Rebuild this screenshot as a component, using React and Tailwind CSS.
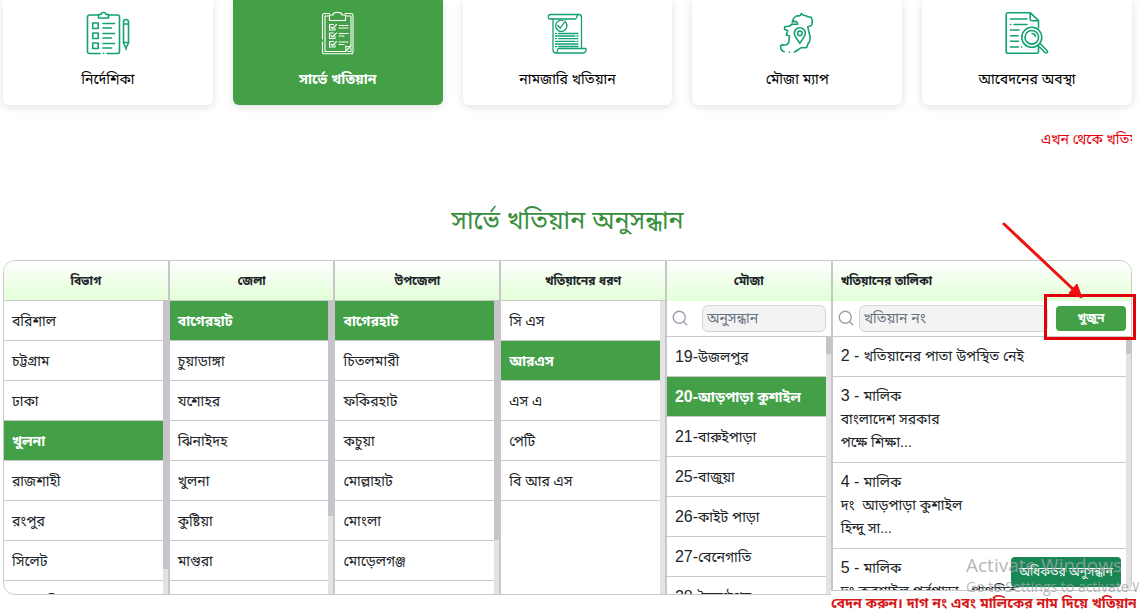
import React, { useState } from 'react';
import { Search } from 'lucide-react';

const ListIcon = () => (
  <svg viewBox="0 0 44 44" className="w-11 h-11" fill="none" stroke="currentColor" strokeWidth="1.6" strokeLinecap="round" strokeLinejoin="round">
    <path d="M12.5 4H3.5a2 2 0 0 0-2 2v34.5a2 2 0 0 0 2 2H14M21 42.5h10.5a2 2 0 0 0 2-2V6a2 2 0 0 0-2-2h-9M17.5 42.5h.2" />
    <path d="M12.5 3.5h2.5a2.5 2 0 0 1 5 0h2.500V7h-10z" />
    <path d="M6.7 12h5.5v5.5H6.7zM6.7 22h5.5v5.5H6.7zM6.7 32h5.5v5.5H6.7z" />
    <path d="M17 12.5h11.5M17 17h8.5M17 22.5h11.5M17 27h8.5M17 32.5h11.5M17 37h8.5" />
    <path d="M37.500 13v-2a2.500 2.500 0 0 1 5 0v21l-2.500 5-2.500-5zM37.500 13h5M37.500 31.500h5M40 37v1.500" />
  </svg>
);

const SurveyIcon = () => (
  <svg viewBox="0 0 44 44" className="w-11 h-11" fill="none" stroke="currentColor" strokeWidth="1.1" strokeLinecap="round" strokeLinejoin="round">
    <path d="M13.5 2.5H8.5a2 2 0 0 0-2 2V28M6.5 31v10a1.800 1.800 0 0 0 2 1.800h26.500a2 2 0 0 0 2-2V4.500a2 2 0 0 0-2-2h-6" />
    <path d="M13.5 5H9v35.5h20.5l5.5-5.5V5h-5.5" />
    <path d="M29.5 40.5c1-2 .8-3.5.2-5.2 1.8.6 3.5.6 5.300-.3M32 40.500h3V37" />
    <path d="M13.5 4h3.5c0-3.500 9-3.500 9 0h3.500v5.500h-16z" />
    <path d="M19 17v2h-5.500v-5.500h4M19 25.500v2h-5.500V22h4M19 34v2h-5.500v-5.500h4" />
    <path d="m15 16 1.500 1.500 4-4M15 24.500l1.500 1.500 4-4M15 33l1.500 1.500 4-4" />
    <path d="M23 14.500h9M23 17h9M23 22.500h9M23 25h5M23 31h9M23 33.500h5" />
  </svg>
);

const ScrollIcon = () => (
  <svg viewBox="0 0 44 44" className="w-11 h-11" fill="none" stroke="currentColor" strokeWidth="1.3" strokeLinecap="round" strokeLinejoin="round">
    <path d="M8 8H4.500C3 8 2.500 3.500 5.500 3.500H34c2 0 2.500 1.500 2.500 3.500v30.500" />
    <path d="M8 8h22.500c1 0 1.200-3 2.500-4.500M8 8v31c0 2 1.200 3 3 3h27.500c2.500 0 3.500-4.500 2-4.500H13.500c-1.200 0-.8 4.300-2.500 4.500" />
    <path d="M20.800 11.500a5.600 5.600 0 1 1-2.800-2M12.700 14.500l2.600 2.700 5-7.200" />
    <path d="M10.500 22.500h1M13.500 22.500h19.500M10.500 25h19.500M32 25h1M10.500 27.700h1M13.500 27.700h19.500M10.500 30.300h19.500M32 30.300h1M10.500 33h22.500M10.500 35.500h1M13.500 35.500h19.500" />
  </svg>
);

const MapIcon = () => (
  <svg viewBox="0 0 44 44" className="w-11 h-11" fill="none" stroke="currentColor" strokeWidth="1.6" strokeLinecap="round" strokeLinejoin="round">
    <path d="M19.500 41l3.300-2 3.400-2.300c2-.3 4 .5 5.600-.4l1-3 1.700-2.600.7-5-1.400-5-1-5c1.500-.7 3.500-.5 4-1.700l.4-3.300c.3-1.500-.5-3.500-1-4.400-1.500-.5-3.500.2-5-1.600-1.500.3-3.500-.7-5-2-.5 1.500-1.500 2.500-2.500 2l-2.500.3-2.400 2-1.600 4c1.500-.7 3.500-.7 4.600 0l1 2c-2 .7-4 .3-5.600 0l-2.700 2-4.700.7-.3 2.600 3.300 1.400-1.600 4.300 3.300 1-.5 4.500c0 2-1.500 4-3.400 4.500-2 0-4-.5-5 .7l.4 3.600c1 1.400 2 2.400 3.300 2.400M14.500 41.300h.3" />
    <path d="M24.800 32.300c-2-3.500-5.500-6.500-5.500-10a5.500 5.500 0 0 1 11 0c0 3.500-3.500 6.500-5.500 10z" />
    <circle cx="24.800" cy="22.300" r="2.300" />
  </svg>
);

const StatusIcon = () => (
  <svg viewBox="0 0 44 44" className="w-11 h-11" fill="none" stroke="currentColor" strokeWidth="1.6" strokeLinecap="round" strokeLinejoin="round">
    <path d="M33.500 17V9.700l-8.300-8H3a1.800 1.800 0 0 0-1.800 1.800v37A1.800 1.800 0 0 0 3 42.300h29c1 0 1.500-.7 1.500-1.500V36M25.200 1.700v6.500c0 1 .5 1.500 1.500 1.500h6.800" />
    <path d="M5.500 8H22M5.500 13.500h.2M9 13.500h13M5.500 19H14M5.500 24.700h7.500M5.500 30.300h8M5.500 36h8M16.500 36h.2" />
    <circle cx="26.800" cy="26.300" r="10" />
    <circle cx="26.800" cy="26.300" r="6.800" />
    <path d="M27 22.500c1.700 0 3 1 3.500 2.700M33 34.500l7 7c1.500 1.300 3.300-.7 2-2l-7-7" />
  </svg>
);

const menuItems = [
  { label: 'নির্দেশিকা', icon: ListIcon },
  { label: 'সার্ভে খতিয়ান', icon: SurveyIcon, active: true },
  { label: 'নামজারি খতিয়ান', icon: ScrollIcon },
  { label: 'মৌজা ম্যাপ', icon: MapIcon },
  { label: 'আবেদনের অবস্থা', icon: StatusIcon },
];

const columns = [
  {
    title: 'বিভাগ',
    selected: 'খুলনা',
    thumb: 'h-[268px]',
    items: ['বরিশাল', 'চট্টগ্রাম', 'ঢাকা', 'খুলনা', 'রাজশাহী', 'রংপুর', 'সিলেট', 'ময়মনসিংহ'],
  },
  {
    title: 'জেলা',
    selected: 'বাগেরহাট',
    thumb: 'h-[215px]',
    items: ['বাগেরহাট', 'চুয়াডাঙ্গা', 'যশোহর', 'ঝিনাইদহ', 'খুলনা', 'কুষ্টিয়া', 'মাগুরা', 'মেহেরপুর'],
  },
  {
    title: 'উপজেলা',
    selected: 'বাগেরহাট',
    thumb: 'h-[239px]',
    items: ['বাগেরহাট', 'চিতলমারী', 'ফকিরহাট', 'কচুয়া', 'মোল্লাহাট', 'মোংলা', 'মোড়েলগঞ্জ', 'রামপাল'],
  },
  {
    title: 'খতিয়ানের ধরণ',
    selected: 'আরএস',
    thumb: 'h-0',
    items: ['সি এস', 'আরএস', 'এস এ', 'পেটি', 'বি আর এস'],
  },
  {
    title: 'মৌজা',
    selected: '20-আড়পাড়া কুশাইল',
    thumb: 'h-[17px]',
    search: true,
    items: ['19-উজলপুর', '20-আড়পাড়া কুশাইল', '21-বারুইপাড়া', '25-বাজুয়া', '26-কাইট পাড়া', '27-বেনেগাতি', '28-বৈকুণ্ঠপুর'],
  },
];

const khatians = [
  ['2 - খতিয়ানের পাতা উপস্থিত নেই'],
  ['3 - মালিক', 'বাংলাদেশ সরকার', 'পক্ষে শিক্ষা...'],
  ['4 - মালিক', 'দং  আড়পাড়া কুশাইল', 'হিন্দু সা...'],
  ['5 - মালিক', 'দং কুরশাইল পূর্বপাড়া,  প্রাথমিক'],
];

// Leading serial number is set a size larger than the Bangla name
const ItemText = ({ text }) => {
  const number = text.match(/^[\d\s-]*/)[0];

  return (
    <>
      {number && <span className="text-base leading-none">{number}</span>}
      {text.slice(number.length)}
    </>
  );
};

const Scrollbar = ({ thumb }) => (
  <div className="w-[5px] shrink-0 bg-[#e3e3e3]">
    <div className={`bg-[#c8c2ca] ${thumb}`}></div>
  </div>
);

const Column = ({ column }) => {
  const [selected, setSelected] = useState(column.selected);

  return (
    <div className="flex flex-col min-w-0 border-r-2 border-[#c9c6ca]">
      <h3 className={`h-10 shrink-0 flex items-center justify-center text-xs font-bold bg-linear-to-b from-white to-[#e2ffd6] ${column.search ? '' : 'border-b border-[#c9c9c9]'}`}>
        {column.title}
      </h3>
      {column.search && (
        <div className="h-9 shrink-0 flex items-center pl-1 pr-[5px] pb-px border-b border-[#c9c9c9]">
          <Search className="w-[18px] h-[18px] shrink-0 text-gray-400" strokeWidth={1.8} />
          <input
            type="text"
            aria-label="মৌজা অনুসন্ধান"
            placeholder="অনুসন্ধান"
            className="ml-[13px] min-w-0 flex-1 h-[27px] px-1 text-sm rounded-md border border-gray-300 bg-[#f3f3f3] placeholder:text-gray-500"
          />
        </div>
      )}
      <div className="flex flex-1 min-h-0">
        <ul className="flex-1 min-w-0 overflow-hidden">
          {column.items.map((item) => (
            <li key={item} className="border-b border-[#c9c9c9]">
              <button
                type="button"
                onClick={() => setSelected(item)}
                className={`block w-full h-[39px] px-2 text-left text-sm leading-6 whitespace-nowrap overflow-hidden ${item === selected ? 'bg-[#43a047] text-white font-bold' : ''}`}
              >
                <ItemText text={item} />
              </button>
            </li>
          ))}
        </ul>
        <Scrollbar thumb={column.thumb} />
      </div>
    </div>
  );
};

const KhatianColumn = () => (
  <div className="flex flex-col min-w-0">
    <h3 className="h-10 shrink-0 flex items-center px-2 text-xs font-bold bg-linear-to-b from-white to-[#e2ffd6]">
      খতিয়ানের তালিকা
    </h3>
    <div className="h-9 shrink-0 flex items-center pl-1 pr-[5px] pb-px border-b border-[#c9c9c9]">
      <Search className="w-[18px] h-[18px] shrink-0 text-gray-400" strokeWidth={1.8} />
      <input
        type="text"
        aria-label="খতিয়ান নং"
        placeholder="খতিয়ান নং"
        className="ml-1 min-w-0 flex-1 h-[27px] px-1 text-sm rounded-md border border-gray-300 bg-[#f3f3f3] placeholder:text-gray-500"
      />
      <button type="button" className="ml-2 w-[70px] h-[25px] rounded-sm bg-[#43a047] text-white text-xs font-bold">
        খুজুন
      </button>
    </div>
    <div className="flex flex-1 min-h-0">
      <ul className="flex-1 min-w-0 overflow-hidden">
        {khatians.map((lines) => (
          <li key={lines[0]} className="px-2 py-2 border-b border-[#c9c9c9] text-sm leading-[23px] whitespace-pre">
            {lines.map((line) => (
              <div key={line}>
                <ItemText text={line} />
              </div>
            ))}
          </li>
        ))}
      </ul>
      <Scrollbar thumb="h-[17px]" />
    </div>
  </div>
);

const App = () => {
  return (
    <div className="relative h-screen overflow-hidden bg-white text-[#212529] font-['Liberation_Sans','Noto_Sans_Bengali','Noto_Sans',sans-serif]">
      <div className="pl-[3px] pr-[7px]">
        <nav className="grid grid-cols-5 gap-5">
          {menuItems.map(({ label, icon: Icon, active }) => (
            <a
              key={label}
              href="#"
              className={`h-[105px] pt-[11px] flex flex-col items-center gap-3 rounded-b-md shadow-[0_2px_8px_rgba(0,0,0,0.12)] ${active ? 'bg-[#43a047] text-white' : 'bg-white text-[#12a074]'}`}
            >
              <Icon />
              <span className={`text-sm leading-6 ${active ? 'font-bold' : 'text-black'}`}>{label}</span>
            </a>
          ))}
        </nav>

        <p className="mt-[22px] ml-auto w-[91px] overflow-hidden whitespace-nowrap text-sm leading-6 text-red-600">
          এখন থেকে খতিয়ান
        </p>

        <h2 className="mt-[50px] mb-5 text-center text-[25px] leading-[39px] text-[#388e3c]">সার্ভে খতিয়ান অনুসন্ধান</h2>

        <div className="relative">
          <div className="grid grid-cols-[repeat(5,minmax(0,35fr))_minmax(0,63fr)] h-[335px] rounded-xl border border-[#c9c9c9] overflow-hidden">
            {columns.map((column) => (
              <Column key={column.title} column={column} />
            ))}
            <KhatianColumn />
          </div>

          {/* Pointer to the search button */}
          <div className="absolute -right-1 top-[34px] w-[92px] h-[46px] border-3 border-[#e3000b] pointer-events-none"></div>
          <svg className="absolute right-[47px] -top-[38px] w-[84px] h-[78px] pointer-events-none" viewBox="0 0 84 78" fill="#ef1010" stroke="#ef1010">
            <path d="M3 2 74 69" strokeWidth="3" strokeLinecap="round" />
            <path d="M81 76 68 71 76 62z" />
          </svg>

          <button type="button" className="absolute right-[11px] bottom-2 w-[110px] h-[30px] rounded bg-[#198754] text-white text-xs whitespace-nowrap">
            অধিকতর অনুসন্ধান
          </button>

          {/* Scrolling notice */}
          <p className="absolute left-[828px] -right-1 top-[330px] h-6 overflow-hidden whitespace-nowrap border-t border-[#c9c9c9] bg-white text-sm leading-6 font-bold text-[#d61a1a]">
            বেদন করুন। দাগ নং এবং মালিকের নাম দিয়ে খতিয়ান
          </p>
        </div>
      </div>

      <div className="absolute right-0 bottom-3 w-[173px] overflow-hidden whitespace-nowrap text-[#a0a4a8]/80 font-['Open_Sans',sans-serif] pointer-events-none">
        <div className="text-[19px] leading-6">Activate Windows</div>
        <div className="text-sm leading-5">Go to Settings to activate Windows.</div>
      </div>
    </div>
  );
};

export default App;
